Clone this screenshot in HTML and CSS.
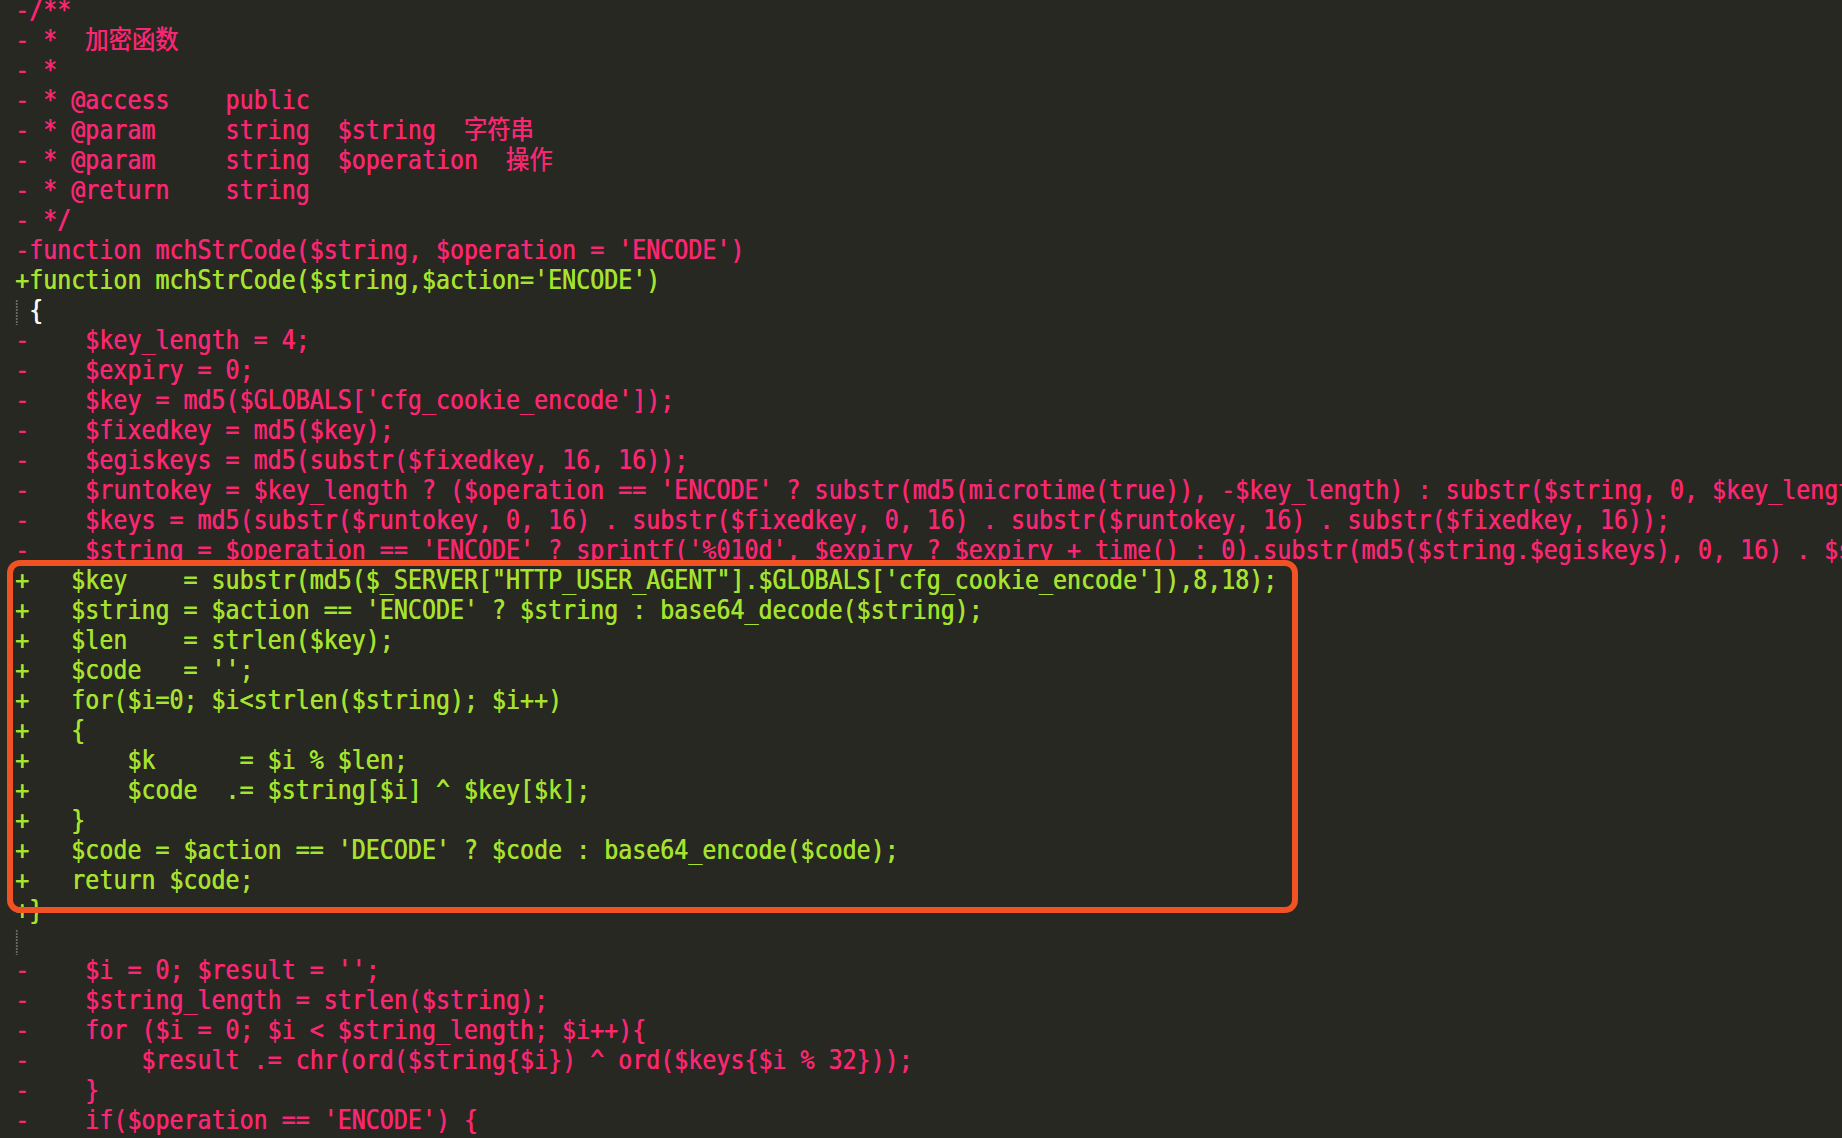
FILE: index.html
```html
<!DOCTYPE html>
<html lang="zh">
<head>
<meta charset="utf-8">
<title>diff</title>
<link rel="stylesheet" href="styles.css">
</head>
<body>
<div class="editor">
  <div class="lines">
    <div class="ln del">-/**</div>
    <div class="ln del">- *  加密函数</div>
    <div class="ln del">- *</div>
    <div class="ln del">- * @access    public</div>
    <div class="ln del">- * @param     string  $string  字符串</div>
    <div class="ln del">- * @param     string  $operation  操作</div>
    <div class="ln del">- * @return    string</div>
    <div class="ln del">- */</div>
    <div class="ln del">-function mchStrCode($string, $operation = 'ENCODE')</div>
    <div class="ln add">+function mchStrCode($string,$action='ENCODE')</div>
    <div class="ln ctx guide"> {</div>
    <div class="ln del">-    $key_length = 4;</div>
    <div class="ln del">-    $expiry = 0;</div>
    <div class="ln del">-    $key = md5($GLOBALS['cfg_cookie_encode']);</div>
    <div class="ln del">-    $fixedkey = md5($key);</div>
    <div class="ln del">-    $egiskeys = md5(substr($fixedkey, 16, 16));</div>
    <div class="ln del">-    $runtokey = $key_length ? ($operation == 'ENCODE' ? substr(md5(microtime(true)), -$key_length) : substr($string, 0, $key_length)) : '';</div>
    <div class="ln del">-    $keys = md5(substr($runtokey, 0, 16) . substr($fixedkey, 0, 16) . substr($runtokey, 16) . substr($fixedkey, 16));</div>
    <div class="ln del">-    $string = $operation == 'ENCODE' ? sprintf('%010d', $expiry ? $expiry + time() : 0).substr(md5($string.$egiskeys), 0, 16) . $string : base64_decode(substr($string, $key_length));</div>
    <div class="ln add">+   $key    = substr(md5($_SERVER["HTTP_USER_AGENT"].$GLOBALS['cfg_cookie_encode']),8,18);</div>
    <div class="ln add">+   $string = $action == 'ENCODE' ? $string : base64_decode($string);</div>
    <div class="ln add">+   $len    = strlen($key);</div>
    <div class="ln add">+   $code   = '';</div>
    <div class="ln add">+   for($i=0; $i&lt;strlen($string); $i++)</div>
    <div class="ln add">+   {</div>
    <div class="ln add">+       $k      = $i % $len;</div>
    <div class="ln add">+       $code  .= $string[$i] ^ $key[$k];</div>
    <div class="ln add">+   }</div>
    <div class="ln add">+   $code = $action == 'DECODE' ? $code : base64_encode($code);</div>
    <div class="ln add">+   return $code;</div>
    <div class="ln add">+}</div>
    <div class="ln ctx guide"> </div>
    <div class="ln del">-    $i = 0; $result = '';</div>
    <div class="ln del">-    $string_length = strlen($string);</div>
    <div class="ln del">-    for ($i = 0; $i &lt; $string_length; $i++){</div>
    <div class="ln del">-        $result .= chr(ord($string{$i}) ^ ord($keys{$i % 32}));</div>
    <div class="ln del">-    }</div>
    <div class="ln del">-    if($operation == 'ENCODE') {</div>
  </div>
  <div class="mark"></div>
</div>
</body>
</html>
```

FILE: styles.css
```css
html, body {
  margin: 0;
  padding: 0;
  background: #272822;
  overflow: hidden;
}

.editor {
  position: relative;
  height: 1138px;
  width: 1842px;
  overflow: hidden;
  padding-left: 15px;
  box-sizing: border-box;
  background: #272822;
}

.lines {
  margin-top: -5.5px;
  width: max-content;
  font-family: "DejaVu Sans Mono", "Noto Sans CJK SC", monospace;
  font-size: 26.5px;
  line-height: 30px;
  transform: scaleX(0.879);
  transform-origin: 0 0;
  text-shadow: 0.5px 0 0 currentColor;
}

.ln {
  white-space: pre;
  height: 30px;
}

.del {
  color: #f92672;
}

.add {
  color: #a6e22e;
}

.ctx {
  color: #f8f8f2;
}

.guide {
  background-image: repeating-linear-gradient(to bottom, #6a6a60 0, #6a6a60 2px, transparent 2px, transparent 3px);
  background-size: 2px 25px;
  background-position: 1px 5px;
  background-repeat: no-repeat;
}

.mark {
  position: absolute;
  left: 7px;
  top: 560px;
  width: 1291px;
  height: 353px;
  box-sizing: border-box;
  border: 6px solid #f05224;
  border-radius: 13px;
}
```
